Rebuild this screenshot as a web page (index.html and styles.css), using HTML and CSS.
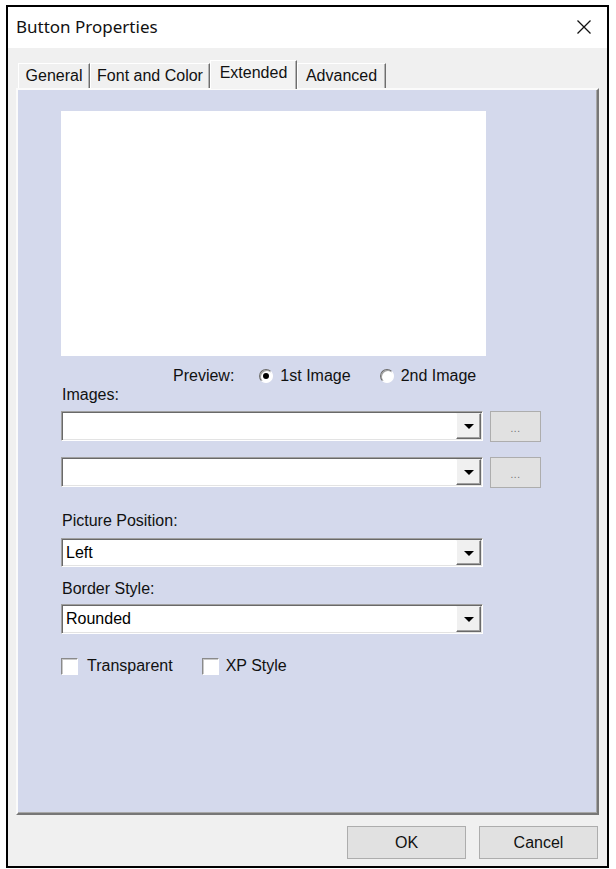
FILE: index.html
```html
<!DOCTYPE html>
<html>
<head>
<meta charset="utf-8">
<title>Button Properties</title>
<link rel="stylesheet" href="styles.css">
</head>
<body>
<div class="window">
  <div class="titlebar">
    <span class="title">Button Properties</span>
    <span class="close"><svg width="16" height="16" viewBox="0 0 16 16"><path d="M1.5 1.5L14.5 14.5M14.5 1.5L1.5 14.5" stroke="#111" stroke-width="1.3" fill="none"/></svg></span>
  </div>
  <div class="body">
    <div class="tabs">
      <div class="tab t-general">General</div>
      <div class="tab t-font">Font and Color</div>
      <div class="tab t-ext active">Extended</div>
      <div class="tab t-adv">Advanced</div>
    </div>
    <div class="panel">
      <div class="content">
        <div class="preview"></div>
        <div class="preview-row">
          <span class="lbl">Preview:</span>
          <span class="radio checked"></span>
          <span class="radio-lbl">1st Image</span>
          <span class="radio r2"></span>
          <span class="radio-lbl">2nd Image</span>
        </div>
        <div class="label l-images">Images:</div>
        <div class="combo-row r1">
          <div class="combo"><span class="value"></span><span class="drop"><span class="arrow"></span></span></div>
          <div class="ellipsis">...</div>
        </div>
        <div class="combo-row r2">
          <div class="combo"><span class="value"></span><span class="drop"><span class="arrow"></span></span></div>
          <div class="ellipsis">...</div>
        </div>
        <div class="label l-pos">Picture Position:</div>
        <div class="combo c-pos"><span class="value">Left</span><span class="drop"><span class="arrow"></span></span></div>
        <div class="label l-border">Border Style:</div>
        <div class="combo c-border"><span class="value">Rounded</span><span class="drop"><span class="arrow"></span></span></div>
        <div class="checks">
          <span class="check"></span><span class="check-lbl">Transparent</span>
          <span class="check c2"></span><span class="check-lbl">XP Style</span>
        </div>
      </div>
    </div>
    <div class="footer">
      <div class="btn">OK</div>
      <div class="btn">Cancel</div>
    </div>
  </div>
</div>
</body>
</html>
```

FILE: styles.css
```css
html, body {
  margin: 0;
  padding: 0;
  background: #ffffff;
}
body {
  font-family: "Liberation Sans", Arial, sans-serif;
  font-size: 16px;
  color: #000;
}
.window {
  box-sizing: border-box;
  width: 603px;
  height: 863px;
  margin: 5px 0 0 6px;
  border: 2px solid #000;
  display: flex;
  flex-direction: column;
  background: #f0f0f0;
}
.titlebar {
  height: 41px;
  flex: none;
  background: #ffffff;
  display: flex;
  align-items: center;
  justify-content: space-between;
  padding-left: 8px;
}
.title {
  font-family: "Noto Sans", "Open Sans", sans-serif;
  font-size: 17px;
  color: #111;
  position: relative;
  top: -1px;
}
.close {
  width: 46px;
  height: 41px;
  display: flex;
  align-items: center;
  justify-content: center;
  position: relative;
  top: -1px;
}
.body {
  flex: 1;
  display: flex;
  flex-direction: column;
  padding: 0 8px 0 8px;
}
.tabs {
  height: 28px;
  margin-top: 12px;
  margin-left: 2px;
  display: flex;
  align-items: flex-end;
  flex: none;
}
.tab {
  box-sizing: border-box;
  height: 25px;
  line-height: 23px;
  text-align: center;
  border-top: 1px solid #ffffff;
  border-left: 1px solid #ffffff;
  border-right: 1px solid #6e6e6e;
  box-shadow: inset -1px 0 0 #b4b4b4;
  color: #111;
}
.t-general { width: 72px; }
.t-font { width: 120px; }
.t-ext { width: 87px; }
.t-adv { width: 89px; }
.tab.active {
  line-height: 24px;
  background: #f3f3f3;
  position: relative;
  z-index: 1;
  margin-bottom: -1px;
  height: 29px;
}
.panel {
  flex: 1;
  box-sizing: border-box;
  background: #d4d9ec;
  border-top: 2px solid #fbfbfb;
  border-left: 2px solid #fbfbfb;
  border-right: 2px solid #777777;
  border-bottom: 2px solid #777777;
  box-shadow: inset -1px -1px 0 #a8a8a8;
}
.content {
  padding-left: 43px;
  padding-top: 21px;
  display: flex;
  flex-direction: column;
  align-items: flex-start;
}
.preview {
  width: 425px;
  height: 245px;
  background: #ffffff;
}
.preview-row {
  margin-top: 10px;
  height: 20px;
  display: flex;
  align-items: center;
  padding-left: 112px;
  color: #111;
}
.lbl {
  margin-right: 25px;
}
.radio {
  box-sizing: border-box;
  width: 14px;
  height: 14px;
  border-radius: 50%;
  background: #fff;
  border: 1px solid;
  border-color: #6a6a6a #ffffff #ffffff #6a6a6a;
  box-shadow: inset 1px 1px 0 #a0a0a0;
  margin-right: 7px;
  display: flex;
  align-items: center;
  justify-content: center;
}
.radio.checked::after {
  content: "";
  width: 6px;
  height: 6px;
  border-radius: 50%;
  background: #000;
}
.radio.r2 {
  margin-left: 29px;
}
.label {
  height: 18px;
  line-height: 18px;
  padding-left: 1px;
  color: #111;
}
.combo-row {
  display: flex;
  align-items: flex-start;
}
.combo-row.r1 { margin-top: 7px; }
.combo-row.r2 { margin-top: 15px; }
.combo {
  box-sizing: border-box;
  width: 422px;
  height: 30px;
  background: #ffffff;
  border-top: 1px solid #a0a0a0;
  border-left: 1px solid #a0a0a0;
  border-right: 1px solid #ffffff;
  border-bottom: 1px solid #ffffff;
  box-shadow: inset 1px 1px 0 #696969, inset -1px -1px 0 #e3e3e3;
  display: flex;
  align-items: stretch;
  padding: 1px;
}
.combo .value {
  flex: 1;
  padding-left: 3px;
  display: flex;
  align-items: center;
}
.drop {
  box-sizing: border-box;
  width: 25px;
  background: #f0f0f0;
  border-top: 1px solid #f0f0f0;
  border-left: 1px solid #ffffff;
  border-right: 1px solid #696969;
  border-bottom: 1px solid #696969;
  box-shadow: inset -1px -1px 0 #a0a0a0;
  display: flex;
  align-items: center;
  justify-content: center;
}
.arrow {
  width: 0;
  height: 0;
  border-left: 5px solid transparent;
  border-right: 5px solid transparent;
  border-top: 5px solid #000;
  margin-top: 1px;
}
.ellipsis {
  box-sizing: border-box;
  margin-left: 7px;
  width: 51px;
  height: 31px;
  background: #e1e1e1;
  border: 1px solid #adadad;
  color: #707070;
  font-size: 10px;
  letter-spacing: 0.5px;
  text-align: center;
  line-height: 34px;
}
.l-pos { margin-top: 24px; }
.c-pos { margin-top: 8px; height: 29px; }
.l-border { margin-top: 13px; }
.c-border { margin-top: 6px; }
.checks {
  margin-top: 23px;
  height: 18px;
  display: flex;
  align-items: center;
  color: #111;
}
.check {
  box-sizing: border-box;
  width: 17px;
  height: 17px;
  background: #fff;
  border-top: 1px solid #8a8a8a;
  border-left: 1px solid #8a8a8a;
  border-right: 1px solid #ffffff;
  border-bottom: 1px solid #ffffff;
  box-shadow: inset 1px 1px 0 #c8c8c8;
  margin-right: 9px;
}
.check.c2 {
  margin-left: 29px;
  margin-right: 7px;
}
.footer {
  flex: none;
  display: flex;
  justify-content: flex-end;
  gap: 13px;
  padding: 11px 1px 7px 0;
}
.btn {
  box-sizing: border-box;
  width: 119px;
  height: 33px;
  background: #e1e1e1;
  border: 1px solid #adadad;
  text-align: center;
  line-height: 31px;
  color: #111;
}
```
